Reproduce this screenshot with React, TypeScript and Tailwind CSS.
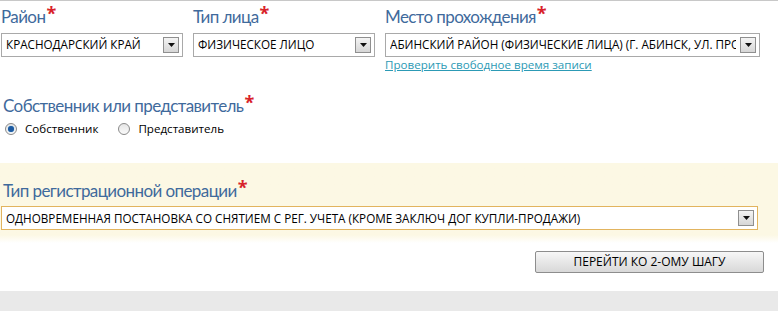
import React from 'react';

const font = { fontFamily: '"Open Sans", "Noto Sans", sans-serif' };

const Label: React.FC<{ text: string }> = ({ text }) => (
  <div className="h-[20px] text-[17px] leading-[20px] text-[#3f6a9c] tracking-[-0.6px]" style={{ fontFamily: 'Lato, "Open Sans", sans-serif' }}>
    {text}
    <span className="relative -top-[3px] ml-[1px] leading-[0] text-[#d8222a] font-bold text-[18px]" style={font}>*</span>
  </div>
);

const Arrow: React.FC = () => (
  <div className="w-[16px] h-[16px] shrink-0 border border-[#8f8f8f] bg-gradient-to-b from-[#f4f4f4] to-[#d6d6d6] flex items-center justify-center">
    <svg width="7" height="4" viewBox="0 0 7 4">
      <polygon points="0,0 7,0 3.5,4" fill="#111" />
    </svg>
  </div>
);

const Select: React.FC<{ value: string; className?: string; border?: string }> = ({ value, className = '', border = 'border-[#a9a9a9]' }) => (
  <div className={`h-[24px] border ${border} bg-white flex items-center pl-[4px] pr-[3px] ${className}`}>
    <span className="flex-1 overflow-hidden whitespace-nowrap text-[11.7px] text-black mr-[4px]">{value}</span>
    <Arrow />
  </div>
);

const Radio: React.FC<{ checked?: boolean; label: string }> = ({ checked, label }) => (
  <label className="flex items-center gap-[8px] text-[11.6px] text-black">
    <span className="w-[12px] h-[12px] rounded-full border border-[#8a8a8a] bg-gradient-to-b from-[#e6e6e6] to-[#fafafa] flex items-center justify-center">
      {checked && <span className="w-[6px] h-[6px] rounded-full bg-[#1e5aa0] shadow-[0_0_1px_#4aa0e0]" />}
    </span>
    {label}
  </label>
);

export default function App() {
  return (
    <div className="w-[778px] h-[311px] bg-white border-t border-[#c8c8c8] flex flex-col" style={font}>
      <div className="flex pl-[1px] pt-[6px] gap-[10px]">
        <div className="w-[182px]">
          <Label text="Район" />
          <Select value="КРАСНОДАРСКИЙ КРАЙ" className="mt-[6px]" />
        </div>
        <div className="w-[182px]">
          <Label text="Тип лица" />
          <Select value="ФИЗИЧЕСКОЕ ЛИЦО" className="mt-[6px]" />
        </div>
        <div className="w-[375px]">
          <Label text="Место прохождения" />
          <Select value="АБИНСКИЙ РАЙОН (ФИЗИЧЕСКИЕ ЛИЦА) (Г. АБИНСК, УЛ. ПРОЛЕТАРСКАЯ)" className="mt-[6px]" />
          <a className="block text-[11.6px] leading-[14px] text-[#2c9ab5] underline mt-[1px]">
            Проверить свободное время записи
          </a>
        </div>
      </div>

      <div className="pl-[3px] mt-[24px]">
        <Label text="Собственник или представитель" />
        <div className="flex gap-[20px] mt-[4px] pl-[2px]">
          <Radio checked label="Собственник" />
          <Radio label="Представитель" />
        </div>
      </div>

      <div className="mt-[26px] h-[80px] bg-gradient-to-b from-[#fcf8e4] from-90% to-white pt-[18px] pl-[1px] pr-[20px]">
        <div className="pl-[2px]">
          <Label text="Тип регистрационной операции" />
        </div>
        <Select
          value="ОДНОВРЕМЕННАЯ ПОСТАНОВКА СО СНЯТИЕМ С РЕГ. УЧЕТА (КРОМЕ ЗАКЛЮЧ ДОГ КУПЛИ-ПРОДАЖИ)"
          className="mt-[5px]"
          border="border-[#e2b45e]"
        />
      </div>

      <div className="flex justify-end pr-[14px] mt-[8px]">
        <button className="w-[229px] h-[22px] rounded-[2px] border border-[#8d8d8d] bg-gradient-to-b from-[#f7f7f7] to-[#d8d8d8] text-[12px] text-black">
          ПЕРЕЙТИ КО 2-ОМУ ШАГУ
        </button>
      </div>

      <div className="mt-auto h-[20px] bg-[#e9e9e9]" />
    </div>
  );
}
